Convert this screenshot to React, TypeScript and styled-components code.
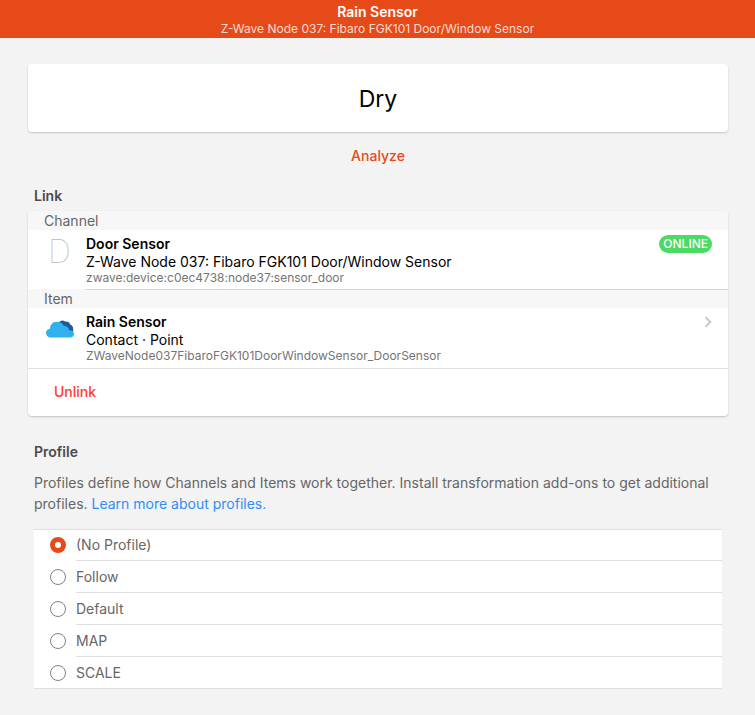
import React from "react";
import styled, { createGlobalStyle } from "styled-components";

const Global = createGlobalStyle`
  * { box-sizing: border-box; }
  body { margin: 0; background: #f3f3f3; color: #000; font-family: Inter, "Liberation Sans", sans-serif; font-size: 14px; }
  button { font: inherit; border: 0; background: none; padding: 0; cursor: pointer; }
`;
const Page = styled.div`min-height: 100vh;`;
const Header = styled.header`
  background: #e64a19; color: #fff; text-align: center; padding: 3px 0 1px;
`;
const Title = styled.h1`margin: 0; font-size: 14px; line-height: 18px; font-weight: 600;`;
const Subtitle = styled.div`font-size: 12px; line-height: 16px; color: #fbdcd2;`;
const Main = styled.main`padding: 26px 27px 26px 28px;`;
const Card = styled.div`
  background: #fff; border-radius: 4px; overflow: hidden; box-shadow: 0 1px 2px rgba(0, 0, 0, 0.2);
`;
const StateCard = styled(Card)`
  padding: 20px 0 18px; line-height: 30px; text-align: center; font-size: 23px;
`;
const Analyze = styled.button`
  && { display: block; margin: 14px auto 0; color: #e64a19; font-weight: 500; line-height: 20px; }
`;
const Heading = styled.h2`
  margin: 0 6px; font-size: 14px; line-height: 20px; font-weight: 600; color: #4a4a4a;
`;
const LinkHeading = styled(Heading)`margin-top: 20px; margin-bottom: 5px;`;
const ProfileHeading = styled(Heading)`margin-top: 26px;`;
const Divider = styled.h3<{ $lined?: boolean }>`
  margin: 0; padding: 0 16px; color: #666; font-size: 14px; font-weight: 400; line-height: 19px;
  background: ${(p) => (p.$lined ? "linear-gradient(#d4d4d4, #d4d4d4) 58px 0 / 100% 1px no-repeat, #f7f7f7" : "#f7f7f7")};
`;
const Row = styled.div`
  display: flex; align-items: flex-start; padding: 5px 16px 4px;
`;
const LastRow = styled(Row)`border-bottom: 1px solid #e0e0e0; padding-bottom: 5px;`;
const Media = styled.div`width: 42px; flex: none; display: flex;`;
const Letter = styled.span`padding-left: 4px; color: #b8b8b8; font-size: 32px; line-height: 34px; font-weight: 100;`;
const Body = styled.div`flex: 1; min-width: 0;`;
const Name = styled.div`font-weight: 600; line-height: 18px;`;
const Detail = styled.div`line-height: 18px;`;
const Id = styled.div`font-size: 12px; line-height: 14px; color: #757575;`;
const Badge = styled.span`
  background: #4cd964; color: #fff; font-size: 12px; line-height: 18px; border-radius: 9px; padding: 0 4px; font-weight: 500;
`;
const Unlink = styled.button`
  && { display: block; width: 100%; text-align: left; padding: 0 26px 1px; line-height: 46px; color: #ff3b30; font-weight: 500; }
`;
const Note = styled.p`margin: 10px 6px 15px; line-height: 21px; color: #666;`;
const Anchor = styled.a`color: #2e8ff7; text-decoration: none;`;
const Options = styled.div`
  margin: 0 6px; background: #fff; box-shadow: inset 0 1px 0 #e0e0e0; border-bottom: 1px solid #e0e0e0;
`;
const Option = styled.label`display: flex; padding-left: 16px; cursor: pointer; color: #666;`;
const Radio = styled.input`
  appearance: none; width: 16px; height: 16px; margin: 8px 10px 0 0; flex: none; border: 1px solid #808080; border-radius: 50%; background: #fff;
  &:checked { border: 5px solid #e64a19; }
`;
const OptionText = styled.span<{ $last: boolean }>`
  flex: 1; line-height: 31px; border-bottom: ${(p) => (p.$last ? "0" : "1px solid #e0e0e0")};
`;

const CloudIcon = () => (
  <svg width="32" height="34" viewBox="0 0 32 34" aria-hidden="true">
    <path d="M15 9.500c1.200-2 4-2.600 6-1 2.700-.5 4.600.7 5.200 3 2.100.9 3.200 2.900 3 5 .2 1.300-.2 2.500-1 3.500H16z" fill="#1d5c9c" />
    <path d="M7 24.500a5 5 0 0 1-5-4.400c0-2.400 1.700-4 4-4.300C6 11.500 9 8.700 12.700 8.700c3.600 0 6 1.600 7.300 4.200 3 0 4.900 1.800 5.200 4.400 2.800-.2 4.800 1.300 4.800 3.500 0 2.400-1.500 3.700-4 3.700z" fill="#30b1ee" />
  </svg>
);
const Chevron = () => (
  <svg width="8" height="12" viewBox="0 0 8 12" fill="none" stroke="#c7c7cc" strokeWidth="2" aria-hidden="true">
    <path d="M1.500 1.200L6.300 6l-4.800 4.800" />
  </svg>
);
const Arrow = styled.div`padding-top: 3px; line-height: 0;`;
const profiles = ["(No Profile)", "Follow", "Default", "MAP", "SCALE"];

export default function App() {
  return (
    <Page>
      <Global />
      <Header>
        <Title>Rain Sensor</Title>
        <Subtitle>Z-Wave Node 037: Fibaro FGK101 Door/Window Sensor</Subtitle>
      </Header>
      <Main>
        <StateCard>Dry</StateCard>
        <Analyze type="button">Analyze</Analyze>
        <LinkHeading>Link</LinkHeading>
        <Card>
          <Divider>Channel</Divider>
          <Row>
            <Media><Letter>D</Letter></Media>
            <Body>
              <Name>Door Sensor</Name>
              <Detail>Z-Wave Node 037: Fibaro FGK101 Door/Window Sensor</Detail>
              <Id>zwave:device:c0ec4738:node37:sensor_door</Id>
            </Body>
            <Badge>ONLINE</Badge>
          </Row>
          <Divider $lined>Item</Divider>
          <LastRow>
            <Media><CloudIcon /></Media>
            <Body>
              <Name>Rain Sensor</Name>
              <Detail>Contact · Point</Detail>
              <Id>ZWaveNode037FibaroFGK101DoorWindowSensor_DoorSensor</Id>
            </Body>
            <Arrow><Chevron /></Arrow>
          </LastRow>
          <Unlink type="button">Unlink</Unlink>
        </Card>
        <ProfileHeading>Profile</ProfileHeading>
        <Note>
          Profiles define how Channels and Items work together. Install transformation add-ons to get additional profiles.{" "}
          <Anchor href="#profiles">Learn more about profiles.</Anchor>
        </Note>
        <Options role="radiogroup" aria-label="Profile">
          {profiles.map((p, i) => (
            <Option key={p}>
              <Radio type="radio" name="profile" defaultChecked={i === 0} />
              <OptionText $last={i === profiles.length - 1}>{p}</OptionText>
            </Option>
          ))}
        </Options>
      </Main>
    </Page>
  );
}
